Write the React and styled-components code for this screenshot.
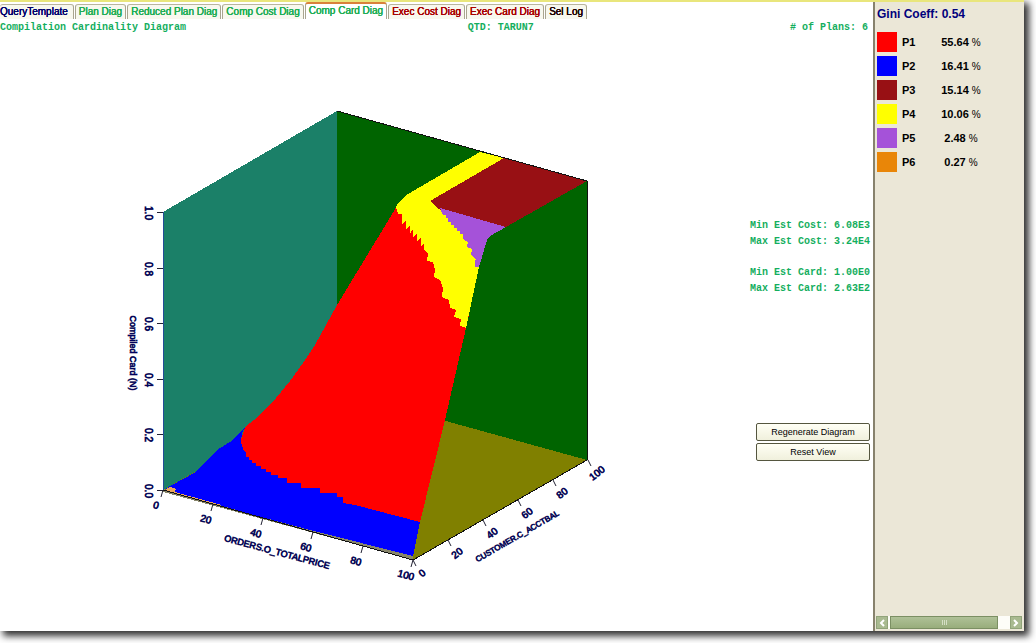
import React from "react";
import styled, { createGlobalStyle } from "styled-components";

const GlobalStyle = createGlobalStyle`
  * {
    box-sizing: border-box;
  }

  body {
    margin: 0;
    background: #fff;
    font-family: "Liberation Sans", Arial, sans-serif;
    overflow: hidden;
  }
`;

const Page = styled.div`
  min-height: 100vh;
  padding: 0 12px 12px 0;
  display: flex;
`;

const Window = styled.div`
  flex: 1;
  min-width: 0;
  display: flex;
  flex-direction: column;
  background: #fff;
  border-top: 2px solid #e9e67c;
  box-shadow: 4px 4px 7px 1px #333;
`;

const Columns = styled.div`
  flex: 1;
  min-height: 0;
  display: flex;
`;

const Main = styled.main`
  flex: 1;
  min-width: 0;
  display: flex;
  flex-direction: column;
`;

const TabBar = styled.nav`
  display: flex;
  align-items: flex-end;
  gap: 1px;
  height: 17px;
`;

const Tab = styled.button`
  height: ${(props) => (props.$active ? 17 : 15)}px;
  padding: ${(props) => (props.$active ? "0 3px 3px" : "0 3px")};
  border: 1px solid #a9a58f;
  border-top: ${(props) => (props.$active ? "2px solid #d9813a" : "1px solid #b9b59f")};
  border-bottom: 0;
  border-radius: 3px 3px 0 0;
  background: ${(props) => (props.$active ? "#fff" : "#f8f8ee")};
  color: ${(props) => props.$color};
  font: 10px "Liberation Sans", Arial, sans-serif;
  line-height: 14px;
  text-shadow: 0 0 currentColor, 0 0 currentColor;
  white-space: nowrap;

  &:first-child {
    padding: 0 5px 0 0;
    border-left: 0;
  }
`;

const InfoBar = styled.header`
  display: grid;
  grid-template-columns: 7fr auto 5fr;
  padding-right: 5px;
  height: 17px;
  color: #14ae5e;
  font: bold 10px/18px "Liberation Mono", "Courier New", monospace;

  span:last-child {
    text-align: right;
  }
`;

const Body = styled.div`
  flex: 1;
  display: grid;
  grid-template-columns: minmax(0, 1fr) 123px;
`;

const Chart = styled.svg`
  display: block;
  width: 100%;

  text {
    font: 9px "Liberation Sans", Arial, sans-serif;
    fill: #00007c;
    text-shadow: 0 0 currentColor;
    stroke: #00007c;
    stroke-opacity: 0.3;
    text-anchor: middle;
    dominant-baseline: central;
  }

  .tick {
    font-size: 10px;
  }
`;

const Controls = styled.aside`
  display: flex;
  flex-direction: column;
  padding: 182px 3px 0 0;
`;

const Stats = styled.p`
  margin: 0 0 15px;
  color: #14ae5e;
  font: bold 10px/16px "Liberation Mono", "Courier New", monospace;
  text-align: right;
  white-space: nowrap;
`;

const Actions = styled.div`
  display: grid;
  gap: 2px;
  margin-top: 111px;
  padding-left: 6px;
`;

const ActionButton = styled.button`
  height: 18px;
  padding: 0;
  border: 1px solid #55563f;
  border-radius: 2px;
  background: linear-gradient(#fffff5, #f0f0dc);
  color: #000;
  font: 9px "Liberation Sans", Arial, sans-serif;
`;

const Sidebar = styled.aside`
  width: 151px;
  display: flex;
  flex-direction: column;
  border-left: 2px solid #87826d;
  background: #ebe7d7;
`;

const Gini = styled.h2`
  margin: 0;
  padding: 4px 2px 0;
  color: #00007c;
  font-size: 12px;
  line-height: 16px;
`;

const Legend = styled.table`
  margin: 8px 0 0 2px;
  border-collapse: collapse;
  align-self: flex-start;
  font-size: 11px;
  font-weight: bold;

  tr {
    height: 24px;
  }

  th,
  td {
    padding: 0;
  }

  th {
    width: 41px;
    padding-left: 5px;
    text-align: left;
  }

  td:last-child {
    width: 46px;
    text-align: center;
  }
`;

const Swatch = styled.div`
  width: 20px;
  height: 20px;
  background: ${(props) => props.$color};
`;

const Percent = styled.span`
  font-size: 10px;
  font-weight: normal;
`;

const ScrollBar = styled.div`
  display: flex;
  gap: 2px;
  height: 13px;
  margin: auto 2px 2px 1px;
  background: #fdfdf8;
`;

const ScrollButton = styled.button`
  width: 12px;
  padding: 0;
  border: 1px solid #91a47a;
  background: #a9ba90;
  display: flex;
  align-items: center;
  justify-content: center;
`;

const ScrollTrack = styled.div`
  flex: 1;
  display: flex;
  padding-right: 10px;
`;

const ScrollThumb = styled.div`
  flex: 1;
  display: flex;
  justify-content: center;
  align-items: center;
  gap: 1px;
  border: 1px solid #7b8f63;
  background: linear-gradient(#afc197, #98ad7c);

  i {
    width: 1px;
    height: 5px;
    background: #d5dfc5;
  }
`;

const green = "#1fae55";
const red = "#a80000";

const tabs = [
  { label: "QueryTemplate", color: "#00006c" },
  { label: "Plan Diag", color: green },
  { label: "Reduced Plan Diag", color: green },
  { label: "Comp Cost Diag", color: green },
  { label: "Comp Card Diag", color: green, active: true },
  { label: "Exec Cost Diag", color: red },
  { label: "Exec Card Diag", color: red },
  { label: "Sel Log", color: "#200000" },
];

const plans = [
  { name: "P1", share: "55.64", color: "#ff0000" },
  { name: "P2", share: "16.41", color: "#0000ff" },
  { name: "P3", share: "15.14", color: "#981014" },
  { name: "P4", share: "10.06", color: "#ffff00" },
  { name: "P5", share: "2.48", color: "#a552d9" },
  { name: "P6", share: "0.27", color: "#e98608" },
];

const cardTicks = ["1.0", "0.8", "0.6", "0.4", "0.2", "0.0"];
const percentTicks = [0, 20, 40, 60, 80, 100];

function PlanSurface() {
  return (
    <g shapeRendering="crispEdges">
      {/* walls and floor */}
      <path d="M163 212L337 111V391L163 490Z" fill="#1b8068" />
      <path d="M337 111L587 181V460L337 391Z" fill="#006400" />
      <path d="M163 490L337 391L587 460L413 560Z" fill="#808000" />
      <path d="M163 489L413 556V560L163 492Z" fill="#87856a" />
      {/* plan regions */}
      <path
        d="M245 427L254 420L262 412L276 398L290 381L303 363L315 345L326 325L337 305L397 206L440 230L470 310L466 328L445 420L420 522L343 510L260 480L238 450Z"
        fill="#ff0000"
      />
      <path
        d="M165 489L172 485L194 473L207 461L217 450L233 440L246 426L242 433L241 442L243 449L246 453V457H249V460H252V463H256V466H261V469H266V472H271V475H278V478H287V483H301V488H320V487V493H337V497H343V503L355 505L420 522L413 556L310 530L250 514Z"
        fill="#0000ff"
      />
      <path d="M165 490L170 487L176 489L175 492L200 499L222 505L212 504Z" fill="#e9a35f" />
      <path
        d="M396 207L399 202L403 198L408 194L480 152L504 158L430 201L440 209L478 220L479 267L466 328L460 326L461 319L454 317L456 310L450 308L449 300L442 297L443 288L440 280L434 277L435 270L433 262L427 261L428 253L424 250V243L421 246V237L417 242V233L413 237V229L410 234V225L406 230V221L402 224V214L398 214Z"
        fill="#ffff00"
      />
      <path d="M504 158L587 181L506 227L438 209L430 201Z" fill="#981014" />
      <path
        d="M440 208L506 227L490 236L487 240L479 267H475V260H476L471 255L472 249L467 247L468 242L463 239V234H460V231H457V228H454V225H451V222H448V218H446V215H443Z"
        fill="#a552d9"
      />
      <path d="M163 212V490" stroke="#244c98" />
      <path d="M337 111L587 181V460M163 490L413 560L587 460" fill="none" stroke="#111" />
    </g>
  );
}

function Axes() {
  return (
    <g>
      {cardTicks.map((value, i) => {
        const y = 212 + Math.round(i * 55.6);
        return (
          <g key={value}>
            <path d={`M157 ${y}H163`} stroke="#223" shapeRendering="crispEdges" />
            <text className="tick" transform={`translate(148 ${y + 1}) rotate(90)`}>
              {value}
            </text>
          </g>
        );
      })}
      {percentTicks.map((value, i) => (
        <g key={value}>
          <path d={`M${163 + i * 50} ${490 + i * 14}l-2 7`} stroke="#223" />
          <text
            className="tick"
            transform={`translate(${156 + i * 50} ${505 + i * 14}) rotate(15)`}
            fontStyle="italic"
          >
            {value}
          </text>
          <path d={`M${413 + i * 35} ${560 - i * 20}l3 6`} stroke="#223" />
          <text className="tick" transform={`translate(${422 + i * 35} ${573 - i * 20}) rotate(-38)`}>
            {value}
          </text>
        </g>
      ))}
      <text transform="translate(133 353) rotate(90)">Compiled Card (N)</text>
      <text transform="translate(277 552) rotate(15)">ORDERS.O_TOTALPRICE</text>
      <text transform="translate(517 536) rotate(-30)" fontStyle="italic">
        <tspan fontSize="8">CUSTOMER.C_ACCTBAL</tspan>
      </text>
    </g>
  );
}

function App() {
  return (
    <Page>
      <GlobalStyle />
      <Window>
        <Columns>
          <Main>
            <TabBar>
              {tabs.map((tab) => (
                <Tab key={tab.label} type="button" $color={tab.color} $active={tab.active}>
                  {tab.label}
                </Tab>
              ))}
            </TabBar>
            <InfoBar>
              <span>Compilation Cardinality Diagram</span>
              <span>QTD: TARUN7</span>
              <span># of Plans: 6</span>
            </InfoBar>
            <Body>
              <Chart viewBox="0 36 750 594" role="img" aria-label="Compilation Cardinality Diagram">
                <PlanSurface />
                <Axes />
              </Chart>
              <Controls>
                <Stats>
                  Min Est Cost: 6.08E3
                  <br />
                  Max Est Cost: 3.24E4
                </Stats>
                <Stats>
                  Min Est Card: 1.00E0
                  <br />
                  Max Est Card: 2.63E2
                </Stats>
                <Actions>
                  <ActionButton type="button">Regenerate Diagram</ActionButton>
                  <ActionButton type="button">Reset View</ActionButton>
                </Actions>
              </Controls>
            </Body>
          </Main>
          <Sidebar>
            <Gini>Gini Coeff: 0.54</Gini>
            <Legend>
              <tbody>
                {plans.map((plan) => (
                  <tr key={plan.name}>
                    <td>
                      <Swatch $color={plan.color} />
                    </td>
                    <th scope="row">{plan.name}</th>
                    <td>
                      {plan.share} <Percent>%</Percent>
                    </td>
                  </tr>
                ))}
              </tbody>
            </Legend>
            <ScrollBar>
              <ScrollButton type="button" aria-label="Scroll left">
                <svg width="6" height="8" viewBox="0 0 6 8">
                  <path d="M5 1L2 4l3 3" fill="none" stroke="#fff" strokeWidth="2" />
                </svg>
              </ScrollButton>
              <ScrollTrack>
                <ScrollThumb>
                  <i />
                  <i />
                  <i />
                </ScrollThumb>
              </ScrollTrack>
              <ScrollButton type="button" aria-label="Scroll right">
                <svg width="6" height="8" viewBox="0 0 6 8">
                  <path d="M1 1l3 3l-3 3" fill="none" stroke="#fff" strokeWidth="2" />
                </svg>
              </ScrollButton>
            </ScrollBar>
          </Sidebar>
        </Columns>
      </Window>
    </Page>
  );
}

export default App;
